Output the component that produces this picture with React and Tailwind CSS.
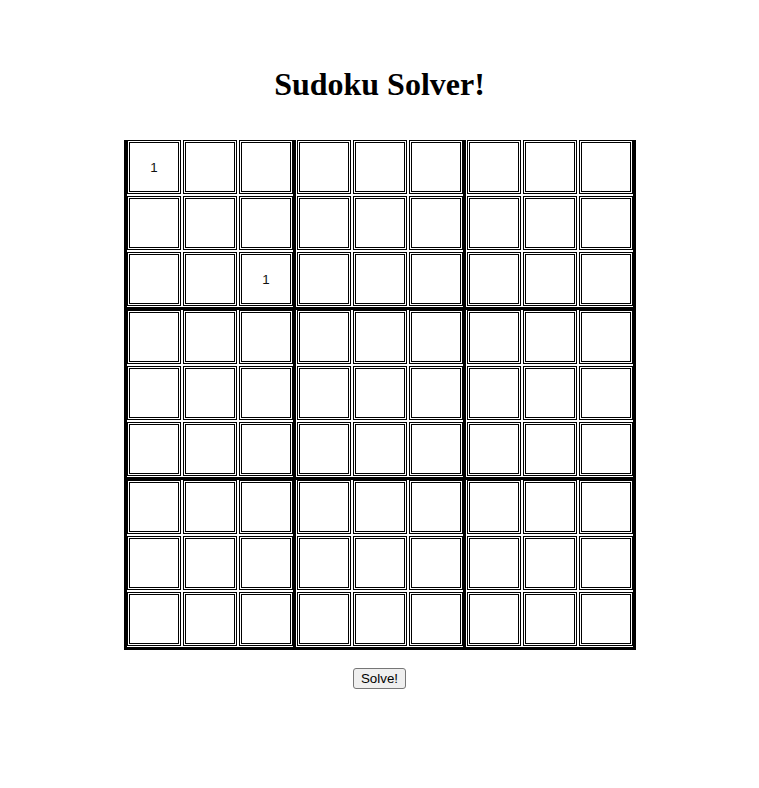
import { useState } from 'react'

const START = {
  '0-0': '1',
  '2-2': '1',
}

const Cell = ({ value, onChange }) => (
  <input
    type="text"
    value={value}
    onChange={onChange}
    maxLength={1}
    className="w-[54px] h-[54px] border-[3px] border-double border-black bg-white text-center text-[13.33px] text-[#111] outline-none"
    style={{ fontFamily: '"Liberation Sans", Arial, sans-serif' }}
  />
)

const App = () => {
  const [board, setBoard] = useState(START)

  const setCell = (r, c, v) => {
    setBoard(prev => ({ ...prev, [`${r}-${c}`]: v }))
  }

  const blocks = [0, 1, 2]

  return (
    <div className="min-h-[788px] bg-white" style={{ fontFamily: '"Liberation Serif", "Times New Roman", serif' }}>
      <h1 className="pt-[66px] text-center text-[32px] leading-[37px] font-bold text-black">Sudoku Solver!</h1>

      <div className="mt-[37px] flex justify-center">
        <div className="ml-[1px] flex flex-col border-l-[3px] border-black">
          {blocks.map(br => (
            <div key={br} className="flex border-b-[3px] border-black">
              {blocks.map(bc => (
                <div
                  key={bc}
                  className={bc === 0
                    ? 'flex flex-col gap-[2px] pb-[1px] border-r-[3px] border-black'
                    : 'flex flex-col gap-[2px] pl-[1px] pb-[1px] border-r-[3px] border-black'}
                >
                  {blocks.map(ir => (
                    <div key={ir} className="flex gap-[2px]">
                      {blocks.map(ic => {
                        const r = br * 3 + ir
                        const c = bc * 3 + ic
                        return (
                          <Cell
                            key={ic}
                            value={board[`${r}-${c}`] || ''}
                            onChange={e => setCell(r, c, e.target.value)}
                          />
                        )
                      })}
                    </div>
                  ))}
                </div>
              ))}
            </div>
          ))}
        </div>
      </div>

      <div className="mt-[18px] flex justify-center">
        <button
          className="h-[21px] px-[7px] border border-[#767676] rounded-[3px] bg-[#efefef] text-[13.33px] leading-[15px] text-black"
          style={{ fontFamily: '"Liberation Sans", Arial, sans-serif' }}
        >
          Solve!
        </button>
      </div>
    </div>
  )
}

export default App
